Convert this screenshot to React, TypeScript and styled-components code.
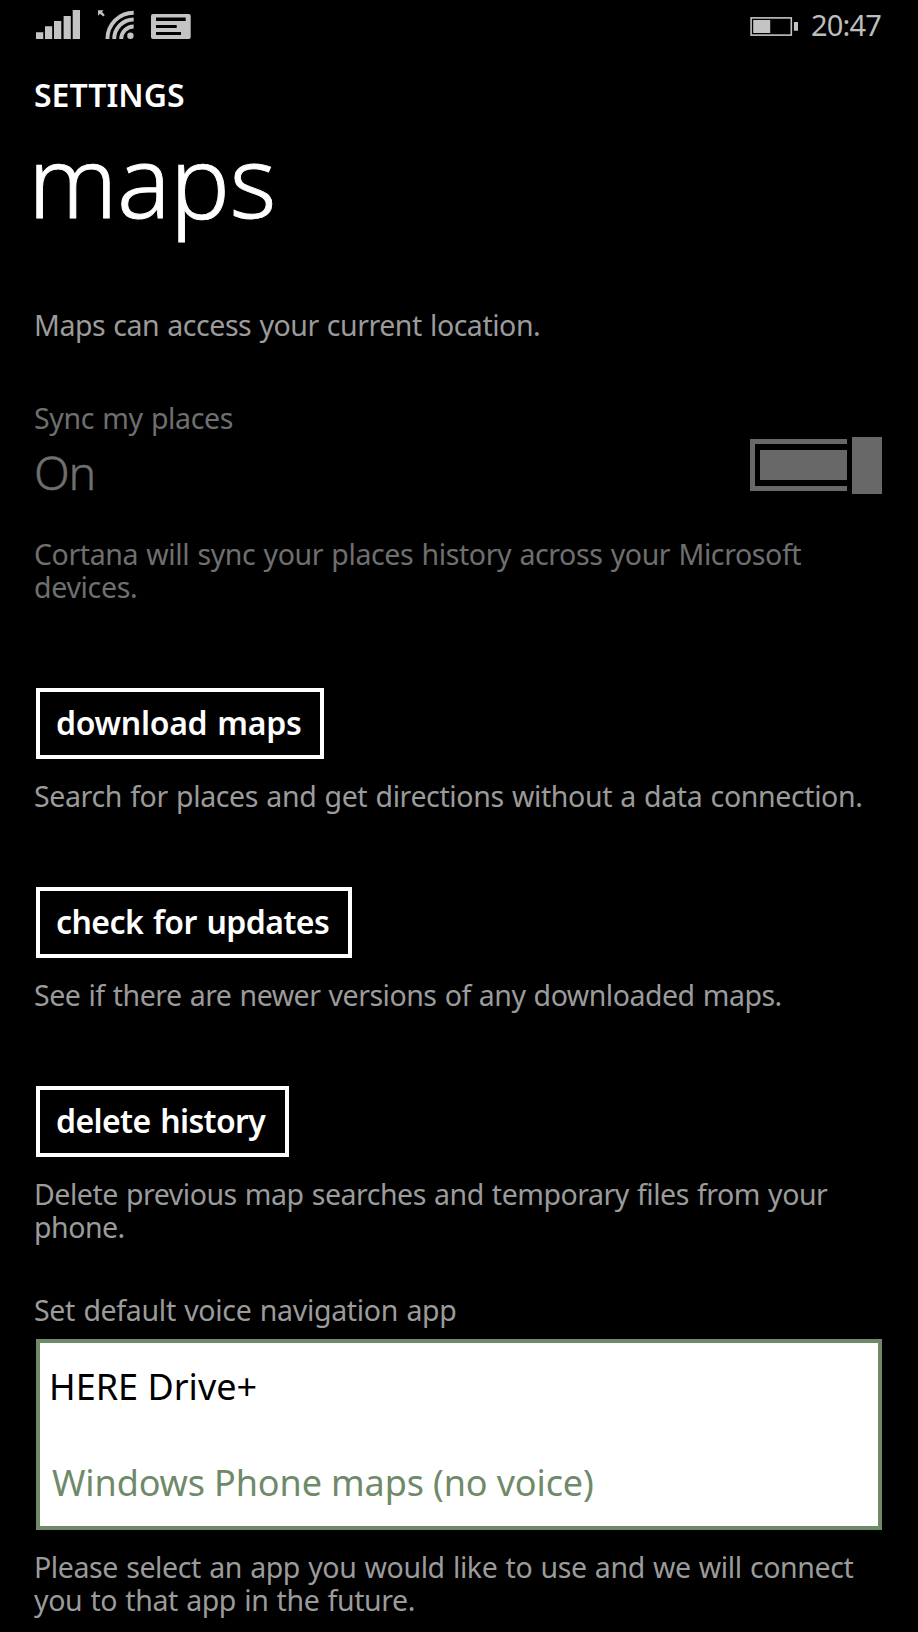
import React from "react";
import styled, { createGlobalStyle } from "styled-components";

const GlobalStyle = createGlobalStyle`
  body {
    margin: 0;
    background: #000;
    font-family: "Noto Sans", "Open Sans", sans-serif;
  }
`;

const Screen = styled.div`
  box-sizing: border-box;
  width: 918px;
  height: 1632px;
  overflow: hidden;
  background: #000;
  display: flex;
  flex-direction: column;
`;

const StatusBar = styled.header`
  box-sizing: border-box;
  height: 50px;
  padding: 0 36px;
  display: flex;
  justify-content: space-between;
  color: #c4c4c4;
`;

const StatusGroup = styled.div`
  display: flex;
  align-items: flex-start;
`;

const Clock = styled.time`
  margin: 5px 0 0 12px;
  width: 71px;
  white-space: nowrap;
  font-size: 29px;
  line-height: 40px;
  letter-spacing: -0.8px;
  color: #bdbdbd;
`;

const Header = styled.div`
  display: flex;
  flex-direction: column;
  color: #fff;
`;

const AppTitle = styled.div`
  margin: 25px 0 0 34px;
  font-size: 32px;
  line-height: 40px;
  font-weight: 600;
`;

const PageTitle = styled.h1`
  margin: 4px 0 0 28px;
  font-size: 100px;
  line-height: 120px;
  font-weight: 300;
  letter-spacing: -0.5px;
  -webkit-text-stroke: 0.9px #fff;
`;

const Content = styled.main`
  margin-top: 70px;
  padding: 0 36px 0 34px;
  display: flex;
  flex-direction: column;
`;

const Section = styled.section<{ $gap: number }>`
  margin-top: ${(p) => p.$gap}px;
  display: flex;
  flex-direction: column;
  align-items: stretch;
`;

const Line = styled.span<{ $track: number; $dim?: boolean }>`
  display: block;
  white-space: nowrap;
  font-size: 28.5px;
  line-height: 33px;
  word-spacing: 1.2px;
  letter-spacing: ${(p) => p.$track}px;
  color: ${(p) => (p.$dim ? "#6f6f6f" : "#9b9b9b")};
`;

const Paragraph = styled.p<{ $gap?: number }>`
  margin: ${(p) => p.$gap ?? 0}px 0 0;
`;

const ToggleRow = styled.div`
  display: flex;
  justify-content: space-between;
  height: 69px;
`;

const ToggleState = styled.span`
  margin-top: 7px;
  font-size: 46.5px;
  line-height: 60px;
  font-weight: 300;
  letter-spacing: -1.2px;
  color: #6f6f6f;
  -webkit-text-stroke: 0.5px #6f6f6f;
`;

const Switch = styled.div`
  margin-top: 2px;
  display: flex;
  align-items: flex-start;
  gap: 5px;
  height: 57px;
`;

const SwitchTrack = styled.div`
  box-sizing: border-box;
  width: 97px;
  height: 52px;
  margin-top: 2px;
  padding: 6px 0 6px 5px;
  border: 5px solid #686868;
  border-right: 0;
  display: flex;
`;

const SwitchFill = styled.div`
  flex: 1;
  background: #686868;
`;

const SwitchThumb = styled.div`
  width: 30px;
  height: 57px;
  background: #686868;
`;

const ActionButton = styled.button<{ $width: number; $track: number }>`
  box-sizing: border-box;
  width: ${(p) => p.$width}px;
  height: 71px;
  margin: 0 0 0 2px;
  padding: 0 0 1px 16px;
  border: 4px solid #fff;
  background: #000;
  color: #fff;
  font-family: inherit;
  font-size: 32px;
  line-height: 44px;
  font-weight: 600;
  text-align: left;
  white-space: nowrap;
  word-spacing: 2px;
  letter-spacing: ${(p) => p.$track}px;
`;

const OptionList = styled.div`
  box-sizing: border-box;
  height: 191px;
  margin: 12px 0 0 2px;
  padding: 19px 9px 15px;
  border: 4px solid #6f8a68;
  background: #fff;
  display: flex;
  flex-direction: column;
  gap: 46px;
`;

const Option = styled.div<{ $selected?: boolean; $track: number }>`
  padding-left: ${(p) => (p.$selected ? 3 : 0)}px;
  font-size: 36px;
  line-height: 50px;
  white-space: nowrap;
  letter-spacing: ${(p) => p.$track}px;
  color: ${(p) => (p.$selected ? "#6f8a68" : "#000")};
`;

const StatusIcons = () => (
  <svg width="156" height="44" viewBox="36 0 156 44" fill="#c4c4c4">
    <path d="M36 32.3h7.3V39H36zM45 26.3h7.2V39H45zM54 21h7.3v18H54zM63.6 16h7.2v23h-7.2zM72.7 10H80v29h-7.3z" />
    <path d="M98 10.3h5.6l-1.6 1.6 2.8 3.2-1.5 1.5-3.2-2.9-2 2z" />
    <g fill="none" stroke="#c4c4c4" strokeWidth="3.9">
      <path d="M107.4 39A26.3 26.3 0 0 1 133.7 12.7" />
      <path d="M114.2 39A19.5 19.5 0 0 1 133.7 19.5" />
      <path d="M121.2 39A12.5 12.5 0 0 1 133.7 26.5" />
    </g>
    <circle cx="130.4" cy="35.8" r="3.2" />
    <rect x="151" y="14" width="39.7" height="25" rx="2" />
    <path fill="#000" d="M156 17.5h29.7V21H156zM156 25h20.7v3H156zM156 32h25v3h-25z" />
  </svg>
);

const BatteryIcon = () => (
  <svg width="49" height="44" viewBox="751 0 49 44" fill="#c4c4c4">
    <rect x="752.1" y="17.9" width="40.2" height="17.2" fill="none" stroke="#c4c4c4" strokeWidth="1.6" />
    <path d="M754.2 20h17v13h-17zM794.9 22h4.1v8.7h-4.1z" />
  </svg>
);

export default function App() {
  return (
    <Screen>
      <GlobalStyle />
      <StatusBar>
        <StatusGroup>
          <StatusIcons />
        </StatusGroup>
        <StatusGroup>
          <BatteryIcon />
          <Clock>20:47</Clock>
        </StatusGroup>
      </StatusBar>
      <Header>
        <AppTitle>SETTINGS</AppTitle>
        <PageTitle>maps</PageTitle>
      </Header>
      <Content>
        <Paragraph>
          <Line $track={-0.465}>Maps can access your current location.</Line>
        </Paragraph>
        <Section $gap={60}>
          <Line $track={-0.37} $dim>Sync my places</Line>
          <ToggleRow>
            <ToggleState>On</ToggleState>
            <Switch role="switch" aria-checked="true">
              <SwitchTrack>
                <SwitchFill />
              </SwitchTrack>
              <SwitchThumb />
            </Switch>
          </ToggleRow>
          <Paragraph $gap={34}>
            <Line $track={-0.395} $dim>Cortana will sync your places history across your Microsoft</Line>
            <Line $track={-0.31} $dim>devices.</Line>
          </Paragraph>
        </Section>
        <Section $gap={84}>
          <ActionButton $width={288} $track={-0.29}>download maps</ActionButton>
          <Paragraph $gap={21}>
            <Line $track={-0.38}>Search for places and get directions without a data connection.</Line>
          </Paragraph>
        </Section>
        <Section $gap={74}>
          <ActionButton $width={316} $track={-0.57}>check for updates</ActionButton>
          <Paragraph $gap={21}>
            <Line $track={-0.49}>See if there are newer versions of any downloaded maps.</Line>
          </Paragraph>
        </Section>
        <Section $gap={74}>
          <ActionButton $width={253} $track={-0.62}>delete history</ActionButton>
          <Paragraph $gap={21}>
            <Line $track={-0.475}>Delete previous map searches and temporary files from your</Line>
            <Line $track={-0.5}>phone.</Line>
          </Paragraph>
        </Section>
        <Section $gap={50}>
          <Line $track={-0.31}>Set default voice navigation app</Line>
          <OptionList>
            <Option $track={0}>HERE Drive+</Option>
            <Option $selected $track={-0.127}>Windows Phone maps (no voice)</Option>
          </OptionList>
          <Paragraph $gap={21}>
            <Line $track={-0.4}>Please select an app you would like to use and we will connect</Line>
            <Line $track={-0.4}>you to that app in the future.</Line>
          </Paragraph>
        </Section>
      </Content>
    </Screen>
  );
}
